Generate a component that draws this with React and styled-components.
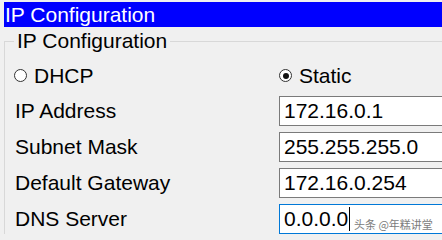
import React from "react";
import styled, { createGlobalStyle } from "styled-components";

const Global = createGlobalStyle`
  html, body { margin: 0; padding: 0; background: #f0f0f0; overflow: hidden; }
  body { font-family: "Liberation Sans", Arial, sans-serif; width: 442px; height: 240px; }
`;

const Page = styled.div`
  padding: 2px 0 0 4px;
  height: 238px;
  box-sizing: border-box;
  overflow: hidden;
  font-size: 21px;
  color: #000;
`;

const TitleBar = styled.div`
  height: 25px;
  background: #0000ff;
  color: #fff;
  line-height: 25px;
  padding-left: 1px;
  white-space: nowrap;
`;

const Group = styled.fieldset`
  margin: 3px 0 0 0;
  border: 1px solid #d8d8d8;
  border-right: none;
  border-bottom: none;
  padding: 8px 0 0 9px;
  min-width: 0;
  width: 480px;
`;

const Legend = styled.legend`
  padding: 0 3px;
  line-height: 22px;
  height: 22px;
`;

const Form = styled.div`
  display: grid;
  grid-template-columns: 265px 200px;
  grid-auto-rows: 30px;
  row-gap: 6px;
  align-items: center;
`;

const RadioRow = styled.div`
  grid-column: 1 / -1;
  display: grid;
  grid-template-columns: 265px 200px;
  align-items: center;
  height: 30px;
  margin-bottom: -1px;
`;

const Radio = styled.label`
  display: flex;
  align-items: center;
  gap: 7px;
  white-space: nowrap;
`;

const Circle = styled.span`
  width: 13px;
  height: 13px;
  box-sizing: border-box;
  border-radius: 50%;
  border: 1px solid #333;
  background: #fff;
  display: flex;
  align-items: center;
  justify-content: center;
  &::after {
    content: "";
    width: 6px;
    height: 6px;
    border-radius: 50%;
    background: ${(p) => (p.$checked ? "#111" : "transparent")};
  }
`;

const Label = styled.div`
  padding-left: 1px;
  white-space: nowrap;
`;

const Field = styled.div`
  position: relative;
  height: 30px;
  box-sizing: border-box;
  border: 1px solid ${(p) => (p.$focus ? "#0078d7" : "#7a7a7a")};
  background: #fff;
  padding-left: 4px;
  display: flex;
  align-items: center;
  white-space: nowrap;
`;

const Caret = styled.span`
  display: inline-block;
  width: 1px;
  height: 24px;
  background: #000;
  margin-left: 1px;
`;

const Watermark = styled.span`
  position: absolute;
  left: 74px;
  top: 13px;
  font-family: "Noto Sans CJK SC", sans-serif;
  font-size: 11px;
  line-height: 13px;
  color: #7c7c7c;
`;

const rows = [
  ["IP Address", "172.16.0.1"],
  ["Subnet Mask", "255.255.255.0"],
  ["Default Gateway", "172.16.0.254"],
];

export default function App() {
  return (
    <>
      <Global />
      <Page>
        <TitleBar>IP Configuration</TitleBar>
        <Group>
          <Legend>IP Configuration</Legend>
          <Form>
            <RadioRow>
              <Radio>
                <Circle />
                DHCP
              </Radio>
              <Radio>
                <Circle $checked />
                Static
              </Radio>
            </RadioRow>
            {rows.map(([l, v]) => (
              <React.Fragment key={l}>
                <Label>{l}</Label>
                <Field>{v}</Field>
              </React.Fragment>
            ))}
            <Label>DNS Server</Label>
            <Field $focus>
              0.0.0.0
              <Caret />
              <Watermark>头条 @年糕讲堂</Watermark>
            </Field>
          </Form>
        </Group>
      </Page>
    </>
  );
}
